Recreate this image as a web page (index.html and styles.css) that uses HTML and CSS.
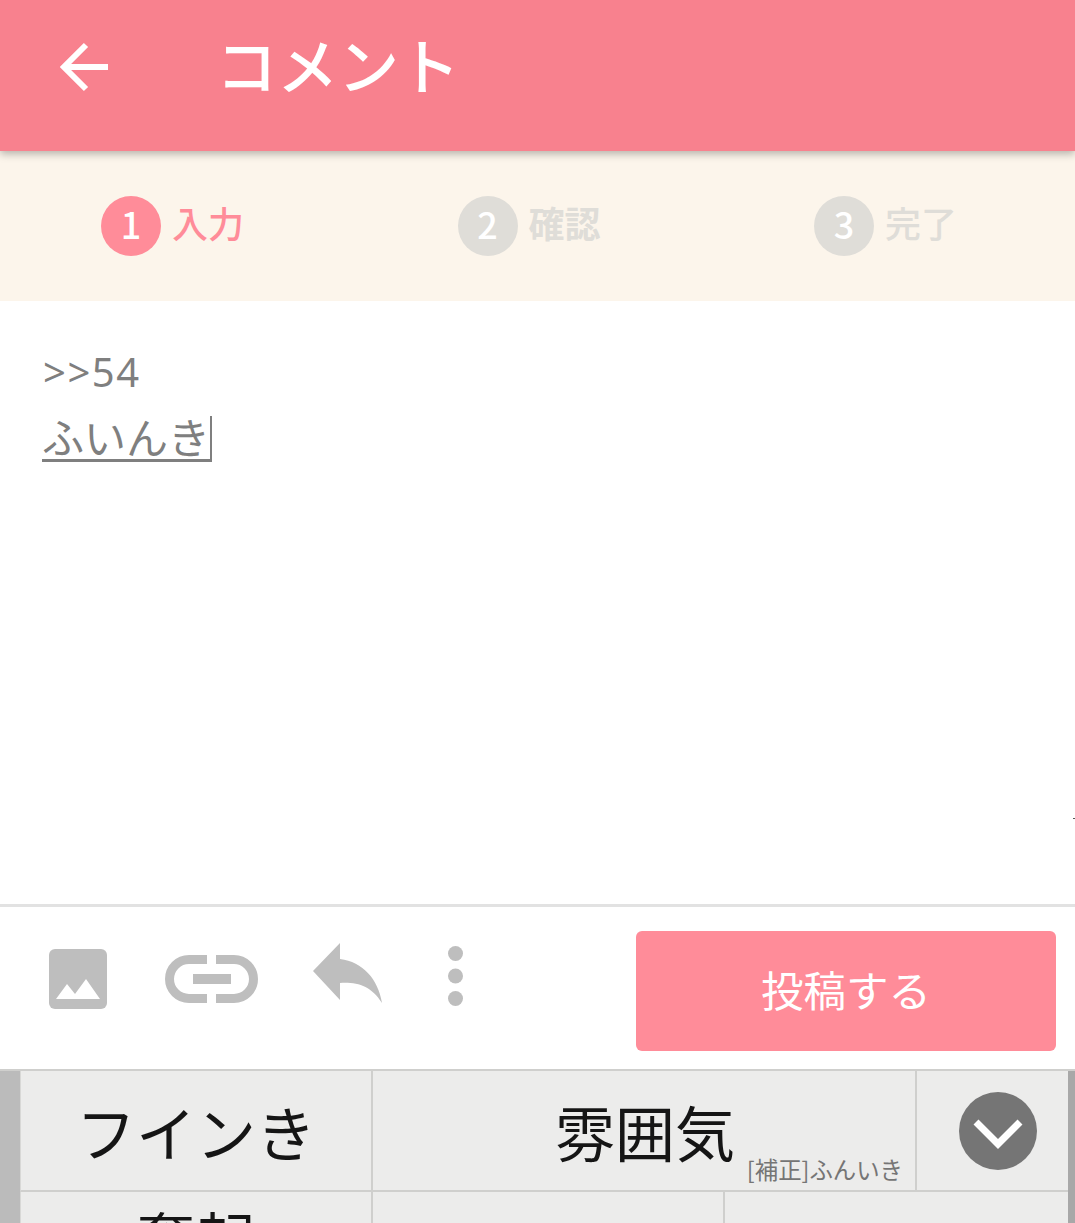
FILE: index.html
```html
<!DOCTYPE html>
<html lang="ja">
<head>
  <meta charset="utf-8"/>
  <title>コメント</title>
  <link rel="stylesheet" href="styles.css">
</head>
<body>

<header class="appbar">
  <svg class="back" width="50" height="50" viewBox="0 0 50 50">
    <path d="M26 3 L4 25 L26 47 M4 25 H48" fill="none" stroke="#fff" stroke-width="6"/>
  </svg>
  <h1>コメント</h1>
</header>

<ol class="steps">
  <li class="step active"><span class="num">1</span><span class="label">入力</span></li>
  <li class="step"><span class="num">2</span><span class="label bold">確認</span></li>
  <li class="step"><span class="num">3</span><span class="label">完了</span></li>
</ol>

<div class="editor">
  <div class="quote">&gt;&gt;54</div>
  <div><span class="composing">ふいんき</span></div>
  <i class="speck"></i>
</div>

<div class="toolbar">
  <svg class="ico-image" width="58" height="60" viewBox="0 0 58 60">
    <rect width="58" height="60" rx="6" fill="#bebebe"/>
    <path d="M7 50 L18 35 L26 45 L37 30 L51 50 Z" fill="#fff"/>
  </svg>
  <svg class="ico-link" width="93" height="48" viewBox="0 0 93 48">
    <path d="M42 4.500 H24 A19.500 19.500 0 0 0 24 43.500 H42 M51 4.500 H69 A19.500 19.500 0 0 1 69 43.500 H51" fill="none" stroke="#bebebe" stroke-width="9"/>
    <rect x="28" y="19" width="38" height="10" fill="#bebebe"/>
  </svg>
  <svg class="ico-reply" width="69" height="60" viewBox="0 0 69 60">
    <path d="M0 28 L27 0 V16 C50 19 65 36 69 60 C58 43 45 39 27 40 V57 Z" fill="#bebebe"/>
  </svg>
  <svg class="ico-more" width="15" height="60" viewBox="0 0 15 60">
    <circle cx="7.500" cy="7.500" r="7.500" fill="#bebebe"/>
    <circle cx="7.500" cy="30" r="7.500" fill="#bebebe"/>
    <circle cx="7.500" cy="52.500" r="7.500" fill="#bebebe"/>
  </svg>
  <button class="submit">投稿する</button>
</div>

<div class="keyboard">
  <div class="side side-left"></div>
  <div class="candidates">
    <div class="row row-first">
      <div class="cand">フインき</div>
      <div class="cand cand-fix">雰囲気<small>[補正]ふんいき</small></div>
      <div class="cand cand-toggle">
        <svg width="78" height="78" viewBox="0 0 78 78">
          <circle cx="39" cy="39" r="39" fill="#757575"/>
          <path d="M17 30 L39 52 L61 30" fill="none" stroke="#fff" stroke-width="7"/>
        </svg>
      </div>
    </div>
    <div class="row row-second">
      <div class="cand cand-low">奮起</div>
      <div class="cand"></div>
      <div class="cand"></div>
    </div>
  </div>
  <div class="side side-right"></div>
</div>

</body>
</html>
```

FILE: styles.css
```css
html, body {
  margin: 0;
  padding: 0;
}
body {
  width: 1075px;
  height: 1223px;
  overflow: hidden;
  display: flex;
  flex-direction: column;
  background: #fff;
  font-family: "Noto Sans CJK JP", "Noto Sans", sans-serif;
}

/* header */
.appbar {
  position: relative;
  z-index: 1;
  flex: none;
  height: 151px;
  display: flex;
  align-items: center;
  background: #f8818e;
  box-shadow: 0 3px 8px rgba(0, 0, 0, 0.28);
}
.back {
  margin-left: 60px;
  margin-top: -17px;
}
h1 {
  margin: -23px 0 0 106px;
  color: #fff;
  font-size: 61px;
  font-weight: 500;
  line-height: 80px;
}

/* steps */
.steps {
  flex: none;
  height: 150px;
  margin: 0;
  padding: 0 0 0 101px;
  list-style: none;
  display: grid;
  grid-template-columns: repeat(3, 356.5px);
  align-items: center;
  background: #fcf5eb;
}
.step {
  display: flex;
  align-items: center;
  gap: 11px;
  color: #dfddd8;
}
.num {
  width: 60px;
  height: 60px;
  border-radius: 50%;
  background: #dfddd8;
  color: #fff;
  font-size: 36px;
  font-weight: 500;
  line-height: 54px;
  text-align: center;
}
.label {
  font-size: 36px;
  font-weight: 500;
  line-height: 52px;
  margin-bottom: 8px;
}
.label.bold {
  font-weight: 700;
}
.step.active {
  color: #ff8c99;
}
.step.active .num {
  background: #ff8c99;
}

/* text area */
.editor {
  position: relative;
  flex: none;
  height: 606px;
  box-sizing: border-box;
  padding: 42px 0 0 43px;
  color: #7f7f7f;
  font-size: 42px;
  line-height: 60px;
  border-bottom: 3px solid #e2e2e2;
}
.quote {
  font-family: "Noto Sans", sans-serif;
  font-size: 40px;
  letter-spacing: 1.5px;
  margin-top: -1px;
  margin-bottom: 1px;
}
.composing {
  display: inline-block;
  vertical-align: top;
  height: 46px;
  margin-top: 13px;
  margin-left: -1px;
  line-height: 40px;
  border-bottom: 3px solid #7f7f7f;
  border-right: 2px solid #7f7f7f;
  box-sizing: border-box;
}
.speck {
  position: absolute;
  left: 1073px;
  top: 517px;
  width: 2px;
  height: 1px;
  background: #555;
}

/* toolbar */
.toolbar {
  flex: none;
  height: 162px;
  display: flex;
  align-items: flex-start;
}
.ico-image {
  margin: 42px 0 0 49px;
}
.ico-link {
  margin: 48px 0 0 58px;
}
.ico-reply {
  margin: 36px 0 0 55px;
}
.ico-more {
  margin: 39px 0 0 66px;
}
.submit {
  width: 420px;
  height: 120px;
  margin: 24px 0 0 173px;
  padding: 0 0 5px;
  border: none;
  border-radius: 6px;
  background: #ff8c99;
  color: #fff;
  font-family: inherit;
  font-size: 42.500px;
  line-height: 110px;
}

/* keyboard */
.keyboard {
  flex: 1;
  display: flex;
  background: #ececeb;
  border-top: 2px solid #cfcfcd;
  min-height: 0;
}
.side {
  flex: none;
}
.side-left {
  width: 20px;
  background: #bbb;
}
.side-right {
  width: 7px;
  background: #a8a8a8;
}
.candidates {
  flex: 1;
  min-width: 0;
}
.row {
  display: grid;
  border-left: 1px solid #d8d8d6;
  box-sizing: border-box;
}
.row-first {
  height: 121px;
  grid-template-columns: 352px 544px 1fr;
  border-bottom: 2px solid #cfcfcd;
}
.row-second {
  height: 60px;
  grid-template-columns: 352px 352px 1fr;
}
.cand {
  position: relative;
  display: flex;
  align-items: center;
  justify-content: center;
  border-right: 2px solid #cfcfcd;
  color: #151515;
  font-size: 60px;
  line-height: 80px;
  overflow: hidden;
  white-space: nowrap;
}
.cand:last-child {
  border-right: none;
}
.cand-fix {
  justify-content: flex-start;
  padding-left: 182px;
}
.cand-fix small {
  position: absolute;
  right: 12px;
  bottom: 6px;
  color: #757575;
  font-size: 23.400px;
  line-height: 30px;
}
.cand-toggle {
  padding: 1px 0 0 11px;
}
.cand-low {
  align-items: flex-start;
  padding-top: 5px;
}
```
